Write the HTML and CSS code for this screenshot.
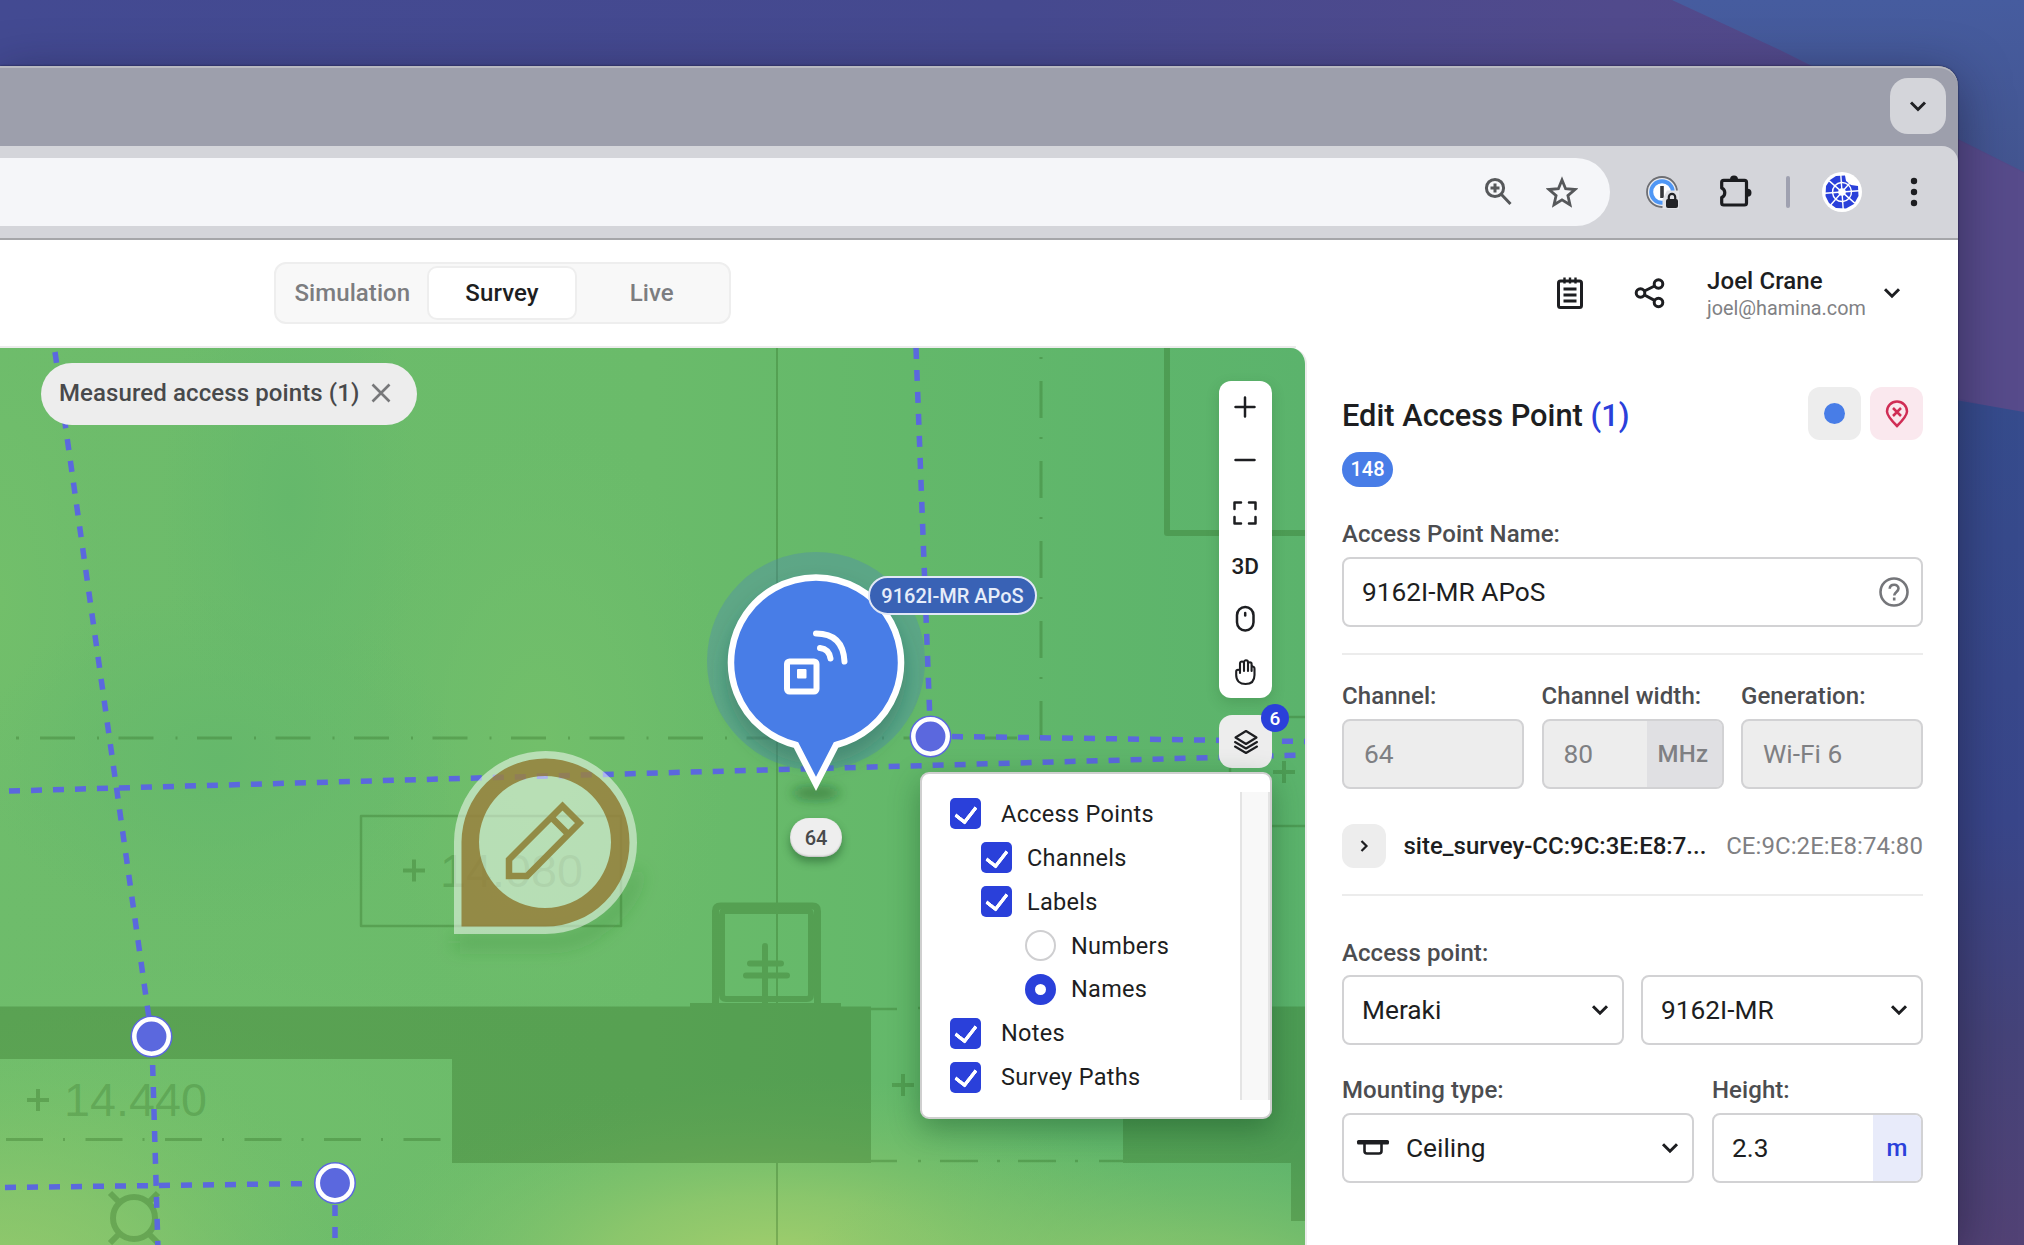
FILE: index.html
```html
<!DOCTYPE html>
<html lang="en">
<head>
<meta charset="utf-8">
<title>Survey – Edit Access Point</title>
<link rel="stylesheet" href="styles.css">
</head>
<body>
<svg class="wallpaper" viewBox="0 0 2024 1245" aria-hidden="true">
  <defs>
    <linearGradient id="wTop" x1="0" x2="1" y1="0" y2="0">
      <stop offset="0" stop-color="#434a92"/><stop offset=".5" stop-color="#45498f"/><stop offset=".8" stop-color="#514a8c"/><stop offset="1" stop-color="#54498a"/>
    </linearGradient>
    <linearGradient id="wBlue" x1="0" x2="0" y1="0" y2="1">
      <stop offset="0" stop-color="#465c9f"/><stop offset="1" stop-color="#435590"/>
    </linearGradient>
    <linearGradient id="wLow" x1="0" x2="0" y1="0" y2="1">
      <stop offset="0" stop-color="#364c8d"/><stop offset=".5" stop-color="#39468a"/><stop offset=".75" stop-color="#454379"/><stop offset="1" stop-color="#524275"/>
    </linearGradient>
  </defs>
  <rect width="2024" height="1245" fill="url(#wTop)"/>
  <path d="M1672 0H2024V172L1780 50Z" fill="url(#wBlue)"/>
  <path d="M1950 136L2024 173V416L1950 396Z" fill="#574b8b"/>
  <path d="M1950 399L2024 412V1245H1950Z" fill="url(#wLow)"/>
</svg>
<div class="window">
  <div class="tabstrip">
    <button class="tab-search"><svg width="20" height="20" viewBox="0 0 20 20"><path d="M3 6.500l7 7 7-7" fill="none" stroke="#1f2023" stroke-width="3"/></svg></button>
  </div>
  <div class="toolbar">
    <div class="omnibox">
      <svg width="30" height="32" viewBox="0 0 30 32" fill="none" stroke="#56585b" stroke-width="3"><circle cx="12" cy="12" r="8.600"/><path d="M18 18l9.500 10M12 7.500v9M7.500 12h9" /></svg>
      <svg width="32" height="32" viewBox="0 0 32 32"><path d="M16 4l3.600 8.700 9.400.8-7.100 6.100 2.100 9.200-8-4.900-8 4.900 2.100-9.200L3 13.500l9.400-.8z" fill="none" stroke="#56585b" stroke-width="2.800"/></svg>
    </div>
    <svg class="ext" width="34" height="34" viewBox="0 0 34 34"><circle cx="17" cy="17" r="15" fill="#e9eaee" stroke="#6e6f73" stroke-width="1.800"/><circle cx="17" cy="17" r="10.800" fill="#fff" stroke="#4f97f5" stroke-width="4"/><path d="M17 11v12" stroke="#38393c" stroke-width="3.600"/><path d="M22 15.500h12V34H17.500v-9.500z" fill="#e1e2e6"/><rect x="21" y="24" width="12" height="9" rx="2" fill="#222326"/><path d="M23.800 25v-3a3.200 3.200 0 0 1 6.400 0v3" fill="none" stroke="#222326" stroke-width="2.200"/></svg>
    <svg class="puzzle" width="36" height="36" viewBox="0 0 36 36"><path d="M4.700 8.300q0-2 2-2H27.500q2 0 2 2V29q0 2-2 2H6.700q-2 0-2-2V23.500a5.200 5.200 0 0 0 0-9.500z" fill="none" stroke="#1b1c1f" stroke-width="3.200" stroke-linejoin="round"/><path d="M13 5.500a4 4 0 0 1 8 0zM30.500 14.800a4 4 0 0 1 0 8z" fill="#1b1c1f"/></svg>
    <span class="sep"></span>
    <svg class="avatar" width="40" height="40" viewBox="-20 -20 40 40"><circle r="20" fill="#fff"/><path d="M-6-16L3-16.500 4-11 9-7 16-6 16.500 4 12 12 4 16.500-6 16-13 11-16.500 4-16-6-12-12z" fill="#2a40da"/><g stroke="#fff" fill="none" stroke-width="1.400" transform="rotate(-4)"><circle r="9.500"/><path d="M0 -17V17M-17 0H17M-12 -12L12 12M-12 12L12 -12"/></g><circle r="3.800" fill="#fff"/></svg>
    <svg class="dots" width="8" height="30" viewBox="0 0 8 30" fill="#1d1e21"><circle cx="4" cy="4" r="3.200"/><circle cx="4" cy="15" r="3.200"/><circle cx="4" cy="26" r="3.200"/></svg>
  </div>
  <header class="app-header">
    <nav class="modes">
      <button class="mode">Simulation</button>
      <button class="mode active">Survey</button>
      <button class="mode">Live</button>
    </nav>
    <div class="account">
      <svg width="28" height="34" viewBox="0 0 28 34" fill="none" stroke="#1d1e21" stroke-width="3"><rect x="2.500" y="5" width="23" height="26.500" rx="2"/><path d="M7.500 13h13M7.500 19h13M7.500 25h13"/><path d="M8.500 1.500v6M14 1.500v6M19.500 1.500v6" stroke-width="2.400"/></svg>
      <svg class="share" width="32" height="32" viewBox="0 0 32 32" fill="none" stroke="#1d1e21" stroke-width="3"><circle cx="6.500" cy="16" r="4.300"/><circle cx="24.500" cy="7" r="4.300"/><circle cx="24.500" cy="25.500" r="4.300"/><path d="M10.500 14l10-5M10.500 18l10 5.300"/></svg>
      <div class="who"><strong>Joel Crane</strong><span>joel@hamina.com</span></div>
      <svg class="chev" width="18" height="12" viewBox="0 0 18 12"><path d="M2 2.200l7 7 7-7" fill="none" stroke="#1d1e21" stroke-width="3"/></svg>
    </div>
  </header>
  <main class="workspace">
    <section class="map">
      <svg class="plan" viewBox="0 348 1305 897" width="1305" height="897">
        <defs>
          <radialGradient id="glow"><stop offset="0" stop-color="#a8d06c"/><stop offset=".4" stop-color="#93c96c" stop-opacity=".8"/><stop offset="1" stop-color="#74bf6c" stop-opacity="0"/></radialGradient>
          <radialGradient id="light"><stop offset="0" stop-color="#72bf6a"/><stop offset=".5" stop-color="#70be6b" stop-opacity=".6"/><stop offset="1" stop-color="#6cbc6b" stop-opacity="0"/></radialGradient>
          <radialGradient id="cool"><stop offset="0" stop-color="#65b86b"/><stop offset="1" stop-color="#66b96c" stop-opacity="0"/></radialGradient>
          <linearGradient id="ground" x1="0" x2="1" y1="0" y2="0"><stop offset="0" stop-color="#6ebc6b"/><stop offset=".5" stop-color="#6abb6a"/><stop offset=".7" stop-color="#63b86a"/><stop offset="1" stop-color="#5bb36c"/></linearGradient>
          <filter id="soft" x="-50%" y="-50%" width="200%" height="200%"><feGaussianBlur stdDeviation="9"/></filter>
          <filter id="softer" x="-50%" y="-100%" width="200%" height="300%"><feGaussianBlur stdDeviation="6"/></filter>
        </defs>
        <rect y="348" width="1305" height="897" fill="url(#ground)"/>
        <ellipse cx="0" cy="600" rx="130" ry="330" fill="url(#light)"/>
        <ellipse cx="540" cy="740" rx="190" ry="330" fill="url(#light)"/>
        <ellipse cx="220" cy="760" rx="240" ry="170" fill="url(#cool)"/>
        <ellipse cx="290" cy="500" rx="130" ry="260" fill="url(#cool)"/>
        <ellipse cx="100" cy="1130" rx="560" ry="220" fill="url(#light)"/>
        <ellipse cx="0" cy="1290" rx="380" ry="260" fill="url(#glow)" opacity=".7"/>
        <ellipse cx="775" cy="1275" rx="440" ry="200" fill="url(#glow)"/>
        <ellipse cx="1180" cy="1310" rx="400" ry="190" fill="url(#glow)" opacity=".7"/>
        <g fill="none" stroke="#2c661e" stroke-linejoin="round" opacity=".3">
          <path d="M777 348V1245" stroke-width="2"/>
          <path d="M40 738H1041" stroke-width="3" stroke-dasharray="35 22 2 19.500"/><path d="M16 738h3" stroke-width="3"/>
          <path d="M1041 738V348" stroke-width="3" stroke-dasharray="37 22 2 19"/>
          <path d="M6 1139.500H452" stroke-width="3" stroke-dasharray="37 20 2 20.500"/>
          <path d="M1167 348V533H1305" stroke-width="6"/>
          <rect x="361" y="816" width="260" height="110" stroke-width="2.500"/>
          <path d="M871 1009H897M918 1008h3M871 1161H897M918 1161h3M940 1161h38M997 1161h3M1018 1161h38M1075 1161h3M1099 1161h24M1289 717h16M1272 826h33M1230 762v12" stroke-width="2.500"/>
          <path d="M715.500 1006V911q0-5 5-5h92q5 0 5 5v95" stroke-width="7"/>
          <path d="M724 911h84q3 0 3 4v80q0 4-4 4h-81q-4 0-4-4v-80q0-4 2-4" stroke-width="6"/>
          <path d="M690 1005.500H841" stroke-width="5"/>
          <path d="M765 946V1006M750 963.500h31M746 975.500h41" stroke-width="6" stroke-linecap="round"/>
          <circle cx="134" cy="1218" r="21" stroke-width="6"/>
          <path d="M110 1193l9 9M158 1193l-9 9M110 1243l9-9M158 1243l-9-9" stroke-width="6"/>
          <path d="M403 870.500h22M414 859.500v22M27 1100h22M38 1089v22M892 1085h22M903 1074v22M1273 772h22M1284 761v22" stroke-width="4"/>
          <path d="M0 1006.500H871V1163H452V1059H0ZM1123 1006.500H1305V1221H1291V1163H1123Z" fill="#2c661e" stroke="none"/>
        </g>
        <g class="elevation"><text x="440" y="887" textLength="143" lengthAdjust="spacingAndGlyphs">14.080</text><text x="64" y="1116" textLength="143" lengthAdjust="spacingAndGlyphs">14.440</text></g>
        <g fill="none" stroke="#5b68de" stroke-width="5.500" stroke-dasharray="11 11">
          <path d="M55 352L151.500 1036"/>
          <path d="M152 1043L158 1250"/>
          <path d="M9 791L1305 755"/>
          <path d="M916 348L930.500 736"/>
          <path d="M952 736.500L1305 741.500"/>
          <path d="M5 1187.500L313 1183.500"/>
          <path d="M335 1205V1245"/>
        </g>
        <g fill="#5b68de" stroke="#fff" stroke-width="4.500">
          <g id="n"><circle cx="151.500" cy="1036.500" r="21" stroke="none"/><circle cx="151.500" cy="1036.500" r="17.200"/></g>
          <use href="#n" x="183.500" y="146.500"/><use href="#n" x="779" y="-300"/>
        </g>
        <path d="M454 942H546a90 90 0 0 0 90-70" fill="none" stroke="#2b7a33" stroke-opacity=".3" stroke-width="12" filter="url(#soft)"/>
        <path d="M454 934V842a91.500 91.500 0 1 1 91.500 92Z" fill="#fff" fill-opacity=".5"/>
        <path fill-rule="evenodd" d="M461.500 926.500V842a84 84 0 1 1 84 84.500ZM545 776a66 66 0 1 0 0 132a66 66 0 1 0 0-132Z" fill="#846717" fill-opacity=".7"/>
        <g fill="none" stroke="#928b45" stroke-width="6.500"><path d="M509 876v-16.500L562.500 806l17 17L527 876Z"/><path d="M552 818l16 16"/></g>
        <circle cx="816" cy="661" r="109" fill="#4a7fc0" fill-opacity=".32"/>
        <circle cx="816" cy="674" r="90" fill="#1f5a50" fill-opacity=".35" filter="url(#soft)"/>
        <ellipse cx="816" cy="793" rx="24" ry="7" fill="#14501f" fill-opacity=".45" filter="url(#softer)"/>
        <path d="M796 745A85 85 0 1 1 836 745L816 784Z" fill="#487de7" stroke="#fff" stroke-width="6.500"/>
        <g fill="none" stroke="#fff" stroke-width="6" stroke-linecap="round"><rect x="787" y="661.500" width="29.500" height="30" rx="2.500"/><path d="M816 633.500q27 0 28.500 28M820 648q9 1 10.500 10.500"/></g>
        <rect x="797" y="669" width="9.500" height="9.500" rx="1" fill="#fff"/>
      </svg>
      <div class="chip">Measured access points (1)<svg width="20" height="20" viewBox="0 0 20 20"><path d="M1.500 1.500l17 17M18.500 1.500l-17 17" stroke="#77787a" stroke-width="2.600"/></svg></div>
      <div class="ap-label">9162I-MR APoS</div>
      <div class="ap-channel">64</div>
      <div class="controls">
        <button><svg width="22" height="22" viewBox="0 0 22 22"><path d="M11 1.500v19M1.500 11h19"/></svg></button>
        <button><svg width="22" height="22" viewBox="0 0 22 22"><path d="M1.500 11h19"/></svg></button>
        <button><svg width="26" height="26" viewBox="0 0 26 26"><path d="M2.500 9V2.500H9M17 2.500h6.500V9M23.500 17v6.500H17M9 23.500H2.500V17"/></svg></button>
        <button>3D</button>
        <button><svg width="26" height="28" viewBox="0 0 26 28"><rect x="5" y="2" width="16.500" height="23.500" rx="8.200"/><path d="M13.200 8v2.500"/></svg></button>
        <button><svg class="hand" width="26" height="28" viewBox="0 0 26 28"><path d="M8 15V5.500a2 2 0 0 1 4 0V13M12 5.500V4.300a2 2 0 0 1 4 0V13M16 6a1.800 1.800 0 0 1 3.600 0V13M19.600 9c1.400-.8 2.900 0 2.900 1.800V17c0 6-3.500 9-9 9s-9.300-3-9.300-9v-3.500c0-2.300 3.800-2.300 3.800 0"/></svg></button>
      </div>
      <button class="layers"><svg width="26" height="26" viewBox="0 0 26 26"><path d="M13 2l10.500 6.500L13 15 2.500 8.500zM2 13l11 6.500L24 13M2 17.500L13 24l11-6.500"/></svg><span class="count">6</span></button>
      <div class="layer-menu">
        <div class="options">
          <label><i class="check"></i>Access Points</label>
          <label class="sub"><i class="check"></i>Channels</label>
          <label class="sub"><i class="check"></i>Labels</label>
          <label class="subsub"><i class="radio"></i>Numbers</label>
          <label class="subsub"><i class="radio on"></i>Names</label>
          <label><i class="check"></i>Notes</label>
          <label><i class="check"></i>Survey Paths</label>
        </div>
        <div class="track"></div>
      </div>
    </section>
    <aside class="inspector">
      <div class="title-row">
        <h1>Edit Access Point <em>(1)</em></h1>
        <button class="sq"><span class="swatch"></span></button>
        <button class="sq danger"><svg width="24" height="28" viewBox="0 0 24 28" fill="none" stroke="#d02d55" stroke-width="2.500"><path d="M12 26C5.500 19.500 2 15.500 2 11.500a10 10 0 0 1 20 0C22 15.500 18.500 19.500 12 26ZM8 8l8 8M16 8l-8 8"/></svg></button>
      </div>
      <span class="pill">148</span>
      <div class="field name"><span class="lbl">Access Point Name:</span>
        <div class="box">9162I-MR APoS<svg class="help" width="32" height="32" viewBox="0 0 32 32" fill="none" stroke="#75767a" stroke-width="2.600"><circle cx="16" cy="16" r="13.500"/><path d="M11.700 12.800c.3-5.300 8.800-5.300 8.800-.3 0 3.300-4.300 3.500-4.300 7"/><path d="M16.200 21.500v3"/></svg></div></div>
      <div class="row three">
        <div class="field"><span class="lbl">Channel:</span><div class="box off">64</div></div>
        <div class="field"><span class="lbl">Channel width:</span><div class="box off">80<span class="unit grey">MHz</span></div></div>
        <div class="field"><span class="lbl">Generation:</span><div class="box off">Wi-Fi 6</div></div>
      </div>
      <div class="ssid">
        <button class="expand"><svg width="12" height="14" viewBox="0 0 12 14"><path d="M3.500 2l5 5-5 5" fill="none" stroke="#1d1e21" stroke-width="2.200"/></svg></button>
        <strong>site_survey-CC:9C:3E:E8:7...</strong><span>CE:9C:2E:E8:74:80</span>
      </div>
      <span class="lbl ap-lbl">Access point:</span>
      <div class="row two">
        <div class="box">Meraki<svg class="chev" width="18" height="12" viewBox="0 0 18 12"><path d="M2 2.200l7 7 7-7"/></svg></div>
        <div class="box">9162I-MR<svg class="chev" width="18" height="12" viewBox="0 0 18 12"><path d="M2 2.200l7 7 7-7"/></svg></div>
      </div>
      <div class="row mount">
        <div class="field"><span class="lbl">Mounting type:</span><div class="box ceil"><svg width="34" height="18" viewBox="0 0 34 18"><rect x="1" y="1" width="32" height="4.500" rx="1.500" fill="#1d1e21"/><path d="M8.500 5v7q0 2.500 2.500 2.500h12q2.500 0 2.500-2.500V5" fill="none" stroke="#1d1e21" stroke-width="2.600"/></svg>Ceiling<svg class="chev" width="18" height="12" viewBox="0 0 18 12"><path d="M2 2.200l7 7 7-7"/></svg></div></div>
        <div class="field"><span class="lbl">Height:</span><div class="box">2.3<span class="unit blue">m</span></div></div>
      </div>
    </aside>
  </main>
</div>
</body>
</html>
```
FILE: styles.css
```css
* { box-sizing: border-box; }
body { display: flow-root; margin: 0; width: 2024px; height: 1245px; overflow: hidden; position: relative; font-family: Roboto, sans-serif; color: #1d1e21; }
button { border: 0; padding: 0; margin: 0; background: none; font: inherit; color: inherit; display: flex; align-items: center; justify-content: center; }
svg { display: block; flex: none; }
.wallpaper { position: absolute; inset: 0; width: 2024px; height: 1245px; }
.window { position: relative; width: 1958px; height: 1179px; margin-top: 66px; background: #9d9fac; border-top-right-radius: 20px; box-shadow: 0 12px 50px rgba(20, 15, 40, .5), 0 0 2px rgba(10, 10, 30, .8); }
.tabstrip { height: 80px; display: flex; justify-content: flex-end; align-items: center; padding: 0 12px 2px 0; border-top: 2px solid #b8b9c0; border-top-right-radius: 20px; }
.tab-search { width: 56px; height: 56px; border-radius: 18px; background: #d4d5da; }
.toolbar { height: 94px; background: #d4d5da; border-top-right-radius: 16px; border-bottom: 2px solid #a5a6a9; display: flex; align-items: center; }
.omnibox { width: 1610px; height: 68px; border-radius: 0 34px 34px 0; background: #f5f6f9; display: flex; align-items: center; justify-content: flex-end; gap: 33px; padding-right: 32px; }
.ext { margin-left: 35px; }
.puzzle { margin-left: 38px; }
.sep { width: 4px; height: 32px; border-radius: 2px; background: #9fa1b0; margin-left: 33px; }
.avatar { margin-left: 32px; }
.dots { margin-left: 48px; }
.app-header { height: 108px; background: #fff; border-bottom: 2px solid; border-image: linear-gradient(90deg, #ececec 1296px, #fff 1296px) 1; display: flex; align-items: center; padding: 0 57px 0 273.5px; justify-content: space-between; }
.modes { width: 457px; height: 62px; border: 2px solid #eee; border-radius: 12px; background: #f8f8f8; display: grid; grid-template-columns: repeat(3, 1fr); padding: 2px; }
.mode { font-size: 24px; font-weight: 500; letter-spacing: .08px; color: #7c7d80; border-radius: 10px; }
.mode.active { background: #fff; border: 2px solid #eee; color: #1d1e21; }
.account { display: flex; align-items: center; }
.share { margin-left: 50px; }
.who { margin-left: 41px; width: 176px; padding-top: 2px; display: flex; flex-direction: column; }
.who strong { font-size: 24px; line-height: 28px; font-weight: 500; letter-spacing: .1px; }
.who span { font-size: 19.8px; line-height: 27px; color: #808184; }
.chev path { fill: none; stroke: #1d1e21; stroke-width: 3; }
.workspace { height: 897px; display: grid; grid-template-columns: 1307px 1fr; background: #fff; }
.map { position: relative; overflow: hidden; border-right: 2px solid #ececec; border-top-right-radius: 16px; }
.elevation { font: 46px "Liberation Sans", sans-serif; fill: #2c661e; fill-opacity: .26; }
.chip { position: absolute; left: 41px; top: 15px; width: 376px; height: 62px; border-radius: 31px; background: #ededed; padding: 0 0 2px 18px; display: flex; align-items: center; gap: 12px; font-size: 24px; font-weight: 500; letter-spacing: .1px; color: #48494b; }
.ap-label { position: absolute; left: 868px; top: 228px; width: 169px; height: 39px; border-radius: 20px; border: 2px solid #e1e8f6; background: #3962b5; color: #e6edfa; font-size: 20px; font-weight: 500; display: flex; align-items: center; justify-content: center; }
.ap-channel { position: absolute; left: 790px; top: 470px; width: 52px; height: 39px; border-radius: 19px; background: #eee; color: #48494b; font-size: 20px; font-weight: 500; display: flex; align-items: center; justify-content: center; box-shadow: 0 5px 9px rgba(20, 70, 30, .45), inset 0 -1px 2px rgba(0, 0, 0, .2); }
.controls { position: absolute; left: 1219px; top: 33px; width: 52.5px; height: 317px; border-radius: 12px; background: #fff; display: grid; grid-template-rows: repeat(6, 1fr); font-size: 22.5px; font-weight: 500; box-shadow: 0 5px 14px rgba(20, 70, 30, .18); }
.controls path, .controls rect, .layers path { fill: none; stroke: #1d1e21; stroke-width: 2.5; stroke-linecap: round; stroke-linejoin: round; }
.controls .hand path, .layers path { stroke-width: 2.1; }
.layers { position: absolute; left: 1219px; top: 367px; width: 53px; height: 53px; border-radius: 13px; background: #ededed; }
.count { position: absolute; left: 42px; top: -11px; width: 28px; height: 28px; border-radius: 50%; background: #2a40da; color: #fff; font-size: 19px; font-weight: 500; line-height: 29px; text-align: center; }
.layer-menu { position: absolute; left: 920px; top: 424px; width: 352px; height: 347px; border: 2px solid #cfcfcf; border-radius: 9px; background: #fff; display: flex; justify-content: space-between; padding: 18px 0; box-shadow: 0 10px 30px rgba(15, 70, 30, .4); }
.options { padding-left: 28px; display: flex; flex-direction: column; }
.options label { display: flex; align-items: center; height: 44.1px; gap: 20px; font-size: 23.5px; letter-spacing: .3px; }
.options .sub { padding-left: 31px; gap: 15px; }
.options .subsub { padding-left: 75px; gap: 15px; }
.check { width: 31px; height: 31px; border-radius: 5px; background: #2a40da; display: grid; place-items: center; }
.check::after { content: ""; width: 10px; height: 16.5px; border: solid #fff; border-width: 0 4.6px 4.6px 0; transform: translateY(-2px) rotate(38deg); border-radius: 2px; }
.radio { width: 31px; height: 31px; border-radius: 50%; border: 2.5px solid #cfcfd1; }
.radio.on { border: 10px solid #2a40da; }
.track { width: 30px; height: 308px; background: #f8f8f8; border: solid #e4e4e4; border-width: 0 2px; }
.inspector { padding: 39px 35px 0; display: flex; flex-direction: column; align-items: stretch; }
.title-row { display: flex; gap: 9px; height: 53px; align-items: center; }
h1 { flex: 1; margin: 5px 0 0; font-size: 30.8px; line-height: 36px; font-weight: 500; }
h1 em { font-style: normal; color: #2a40da; }
.sq { width: 53px; height: 53px; border-radius: 12px; background: #ededed; }
.sq.danger { background: #fae8ee; }
.swatch { width: 21px; height: 21px; border-radius: 50%; background: #487de7; }
.pill { align-self: flex-start; width: 51px; height: 35px; margin-top: 11.5px; margin-bottom: -.5px; border-radius: 17.5px; background: #487de7; color: #fff; font-size: 20px; font-weight: 500; line-height: 35px; text-align: center; }
.lbl { font-size: 24px; font-weight: 500; line-height: 30px; letter-spacing: .07px; color: #4c4d50; }
.field { display: flex; flex-direction: column; gap: 8px; }
.name { margin-top: 33px; padding-bottom: 26px; border-bottom: 2px solid #ececec; }
.box { height: 70px; border: 2px solid #d2d2d4; border-radius: 8px; background: #fff; display: flex; align-items: center; padding-left: 18px; font-size: 26.3px; overflow: hidden; }
.box.off { background: #ededed; color: #7f8083; padding-left: 20px; }
.help { margin-left: auto; margin-right: 11px; }
.row { display: grid; }
.three { grid-template-columns: 182px 182px 182px; gap: 17.5px; margin-top: 26px; }
.unit { margin-left: auto; align-self: stretch; display: flex; align-items: center; justify-content: center; font-size: 24px; font-weight: 500; }
.grey { width: 75px; background: #e0e0e3; padding-right: 2px; letter-spacing: .3px; }
.blue { width: 48px; background: #e8ebfa; color: #2a40da; }
.ssid { display: flex; align-items: center; margin-top: 35px; height: 72px; padding-bottom: 26px; border-bottom: 2px solid #ececec; font-size: 24px; }
.expand { width: 44px; height: 44px; border-radius: 12px; background: #ededed; }
.ssid strong { margin-left: 17.5px; font-weight: 500; }
.ssid span { margin-left: auto; color: #7f8083; letter-spacing: .07px; }
.ap-lbl { margin-top: 42px; }
.two { grid-template-columns: 1fr 1fr; gap: 17px; margin-top: 7px; }
.box .chev { margin-left: auto; margin-right: 13px; }
.mount { grid-template-columns: 352px 211px; gap: 18px; margin-top: 30px; }
.ceil { padding-left: 12px; }
.ceil svg:first-child { margin-right: 16px; }
```
